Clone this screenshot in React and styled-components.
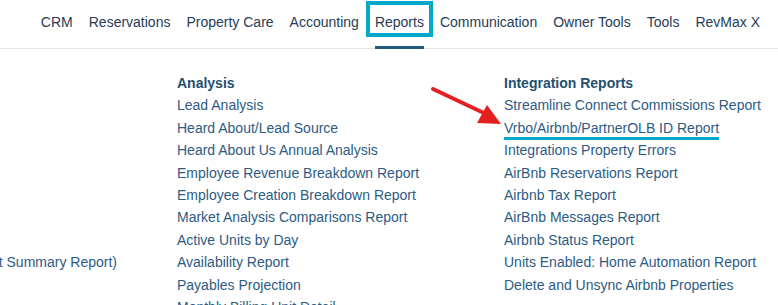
import React from 'react';
import styled, { createGlobalStyle } from 'styled-components';

const GlobalStyle = createGlobalStyle`
  html, body {
    margin: 0;
    padding: 0;
    background: #fff;
    overflow: hidden;
  }
  body {
    font-family: "Liberation Sans", Arial, sans-serif;
    font-size: 14px;
  }
`;

const Page = styled.div`
  position: relative;
  width: 778px;
  height: 305px;
  overflow: hidden;
`;

const NavBar = styled.nav`
  display: flex;
  justify-content: flex-end;
  height: 48px;
  padding-right: 10px;
  border-bottom: 1px solid #e6e6e6;
`;

const NavItem = styled.div`
  position: relative;
  display: flex;
  align-items: center;
  padding: 0 8px 5px;
  color: #263c57;
  font-size: 14px;
  white-space: nowrap;

  ${(p) =>
    p.$active &&
    `
    &::after {
      content: '';
      position: absolute;
      left: 8px;
      right: 8px;
      bottom: -1px;
      height: 3px;
      background: #1f5a7e;
    }
  `}
`;

const Highlight = styled.span`
  position: absolute;
  top: 1px;
  left: -1px;
  right: -1px;
  height: 36px;
  border: 4px solid #04a8cb;
  box-sizing: border-box;
`;

const Menu = styled.div`
  display: grid;
  grid-template-columns: 117px 267px auto;
  column-gap: 60px;
  padding-top: 23px;
`;

const Column = styled.div`
  display: flex;
  flex-direction: column;
  align-items: ${(p) => (p.$right ? 'flex-end' : 'flex-start')};
`;

const Heading = styled.div`
  font-weight: bold;
  color: #24506e;
  line-height: 22.4px;
  height: 22.4px;
`;

const Link = styled.div`
  position: relative;
  color: #2d5b83;
  line-height: 22.4px;
  height: 22.4px;
  white-space: nowrap;

  ${(p) =>
    p.$marked &&
    `
    &::after {
      content: '';
      position: absolute;
      left: 0;
      right: 0;
      bottom: -1px;
      height: 3px;
      background: #04a8cb;
    }
  `}
`;

const Arrow = styled.svg`
  position: absolute;
  left: 428px;
  top: 83px;
`;

const navItems = [
  'CRM',
  'Reservations',
  'Property Care',
  'Accounting',
  'Reports',
  'Communication',
  'Owner Tools',
  'Tools',
  'RevMax X',
];

const leftLinks = ['', '', '', '', '', '', '', '', '(Owner Account Summary Report)'];

const analysis = [
  'Lead Analysis',
  'Heard About/Lead Source',
  'Heard About Us Annual Analysis',
  'Employee Revenue Breakdown Report',
  'Employee Creation Breakdown Report',
  'Market Analysis Comparisons Report',
  'Active Units by Day',
  'Availability Report',
  'Payables Projection',
  'Monthly Billing Unit Detail',
];

const integration = [
  'Streamline Connect Commissions Report',
  'Vrbo/Airbnb/PartnerOLB ID Report',
  'Integrations Property Errors',
  'AirBnb Reservations Report',
  'Airbnb Tax Report',
  'AirBnb Messages Report',
  'Airbnb Status Report',
  'Units Enabled: Home Automation Report',
  'Delete and Unsync Airbnb Properties',
];

const App = () => (
  <Page>
    <GlobalStyle />
    <NavBar>
      {navItems.map((item) => (
        <NavItem key={item} $active={item === 'Reports'}>
          {item}
          {item === 'Reports' && <Highlight />}
        </NavItem>
      ))}
    </NavBar>

    <Menu>
      <Column $right>
        {leftLinks.map((l, i) => (
          <Link key={i}>{l}</Link>
        ))}
      </Column>
      <Column>
        <Heading>Analysis</Heading>
        {analysis.map((l) => (
          <Link key={l}>{l}</Link>
        ))}
      </Column>
      <Column>
        <Heading>Integration Reports</Heading>
        {integration.map((l) => (
          <Link key={l} $marked={l.startsWith('Vrbo')}>
            {l}
          </Link>
        ))}
      </Column>
    </Menu>

    <Arrow width="76" height="44" viewBox="0 0 76 44">
      <line x1="5" y1="6" x2="58" y2="31" stroke="#e3201f" strokeWidth="4" strokeLinecap="round" />
      <polygon points="73,41 49,40 59,22" fill="#e3201f" />
    </Arrow>
  </Page>
);

export default App;
